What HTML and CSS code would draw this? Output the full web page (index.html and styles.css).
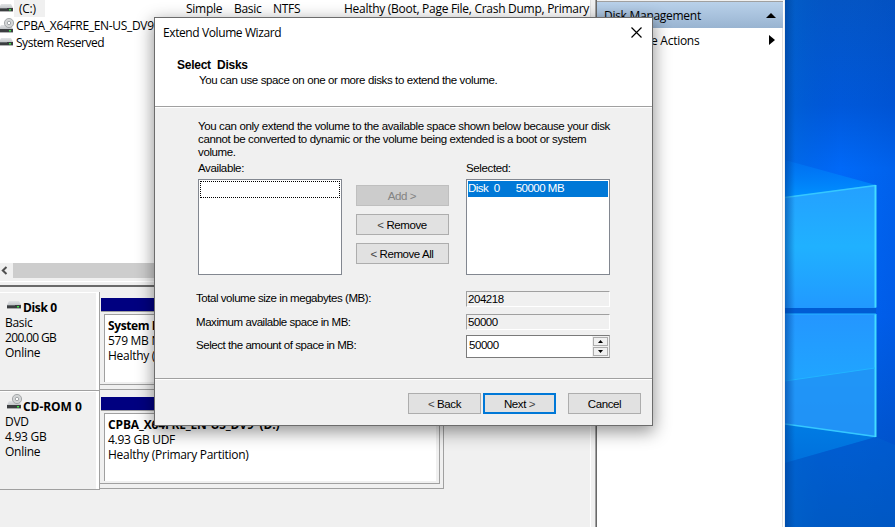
FILE: index.html
```html
<!DOCTYPE html>
<html lang="en">
<head>
<meta charset="utf-8">
<title>Extend Volume Wizard</title>
<link rel="stylesheet" href="styles.css">
</head>
<body>
<svg width="0" height="0" class="defs" aria-hidden="true">
  <defs>
    <linearGradient id="metal" x1="0" y1="0" x2="0" y2="1"><stop offset="0" stop-color="#e2e4e6"/><stop offset="1" stop-color="#c3c6c9"/></linearGradient>
    <symbol id="drive" viewBox="0 0 14 8">
      <path d="M2 0h10l2 4H0z" fill="url(#metal)"/>
      <path d="M0 4h14v3.4H0z" fill="#3b3e40"/>
      <path d="M0 4h8v1H0z" fill="#62676a"/>
      <path d="M10 5h2v1.4h-2z" fill="#3fe04a"/>
    </symbol>
    <symbol id="cdrom" viewBox="0 0 15 15">
      <path d="M2 7h10l2 4H0z" fill="url(#metal)"/>
      <path d="M0 11h14v3.4H0z" fill="#3b3e40"/>
      <path d="M10 12h2v1.4h-2z" fill="#3fe04a"/>
      <circle cx="10" cy="5" r="4.6" fill="#d3d5d6" stroke="#95999c" stroke-width=".8"/>
      <circle cx="10" cy="5" r="1.7" fill="#fff" stroke="#9a9ea1" stroke-width=".9"/>
    </symbol>
  </defs>
</svg>
<div class="screen">
  <main class="console">
    <section class="left">
      <div class="volumes">
        <div class="vol"><svg class="ico" width="14" height="8"><use href="#drive"/></svg><span class="name picked">(C:)</span><span class="layout">Simple</span><span class="type">Basic</span><span class="fs">NTFS</span><span class="status">Healthy (Boot, Page File, Crash Dump, Primary</span></div>
        <div class="vol"><svg class="ico" width="15" height="15"><use href="#cdrom"/></svg><span class="name cd">CPBA_X64FRE_EN-US_DV9</span></div>
        <div class="vol"><svg class="ico" width="14" height="8"><use href="#drive"/></svg><span class="name sys">System Reserved</span></div>
      </div>
      <div class="scroll"><svg width="13" height="15"><path d="M6.5 4 2.8 7.5l3.7 3.5" fill="none" stroke="#505050" stroke-width="2"/></svg><div class="thumb"></div></div>
      <div class="splitter"></div>
      <div class="disks">
        <div class="disk">
          <div class="info">
            <b><svg class="dico" width="14" height="8"><use href="#drive"/></svg>Disk 0</b>
            <span>Basic</span><span class="num">200.00 GB</span><span>Online</span>
          </div>
          <div class="track wide"><div class="part"><div class="stripe"></div><div class="box"><b class="tight">System Reserved</b><span>579 MB NTFS</span><span>Healthy (System, Active)</span></div></div></div>
        </div>
        <div class="disk">
          <div class="info">
            <b class="loose"><svg class="dico cdi" width="15" height="15"><use href="#cdrom"/></svg>CD-ROM 0</b>
            <span>DVD</span><span>4.93 GB</span><span>Online</span>
          </div>
          <div class="track"><div class="part"><div class="stripe"></div><div class="box"><b>CPBA_X64FRE_EN-US_DV9&nbsp; (D:)</b><span>4.93 GB UDF</span><span>Healthy (Primary Partition)</span></div></div></div>
        </div>
      </div>
    </section>
    <aside class="actions">
      <div class="ahead"><span>Disk Management</span><svg width="10" height="5"><path d="M5 0l5 5H0z"/></svg></div>
      <div class="arow"><span>More Actions</span><svg width="6" height="10"><path d="M0 0l6 5L0 10z"/></svg></div>
    </aside>
  </main>
  <svg class="desktop" width="110" height="527" viewBox="785 0 110 527" preserveAspectRatio="none">
    <defs>
      <linearGradient id="sky" x1="0" y1="0" x2="0" y2="1"><stop offset="0" stop-color="#0455c4"/><stop offset=".2" stop-color="#0058da"/><stop offset=".32" stop-color="#0069f8"/><stop offset=".6" stop-color="#0062f2"/><stop offset=".82" stop-color="#0058d4"/><stop offset="1" stop-color="#0052bd"/></linearGradient>
      <linearGradient id="dim" x1="0" y1="0" x2="1" y2="0"><stop offset="0" stop-color="#0070d0" stop-opacity=".4"/><stop offset=".5" stop-color="#0050c0" stop-opacity="0"/><stop offset="1" stop-color="#0040b8" stop-opacity=".2"/></linearGradient>
      <linearGradient id="p1" x1="0" y1="0" x2="0" y2="1"><stop offset="0" stop-color="#24a0ff"/><stop offset=".5" stop-color="#20b1ff"/><stop offset="1" stop-color="#2199ff"/></linearGradient>
      <linearGradient id="p2" x1="0" y1="0" x2="0" y2="1"><stop offset="0" stop-color="#2496ff"/><stop offset=".5" stop-color="#20a4ff"/><stop offset="1" stop-color="#2096fa"/></linearGradient>
      <linearGradient id="ray" x1="0" y1="0" x2="0" y2="1"><stop offset="0" stop-color="#007cf8" stop-opacity=".4"/><stop offset="1" stop-color="#0092ff"/></linearGradient>
      <linearGradient id="low" x1="0" y1="0" x2="0" y2="1"><stop offset="0" stop-color="#007ce4"/><stop offset="1" stop-color="#0070dc"/></linearGradient>
      <linearGradient id="edge" x1="0" y1="0" x2="1" y2="0"><stop offset="0" stop-color="#003c90" stop-opacity=".55"/><stop offset="1" stop-color="#003c90" stop-opacity="0"/></linearGradient>
    </defs>
    <path d="M785 0h110v527H785z" fill="url(#sky)"/>
    <path d="M785 0h110v527H785z" fill="url(#dim)"/>
    <path d="M785 160l91 25-91 12z" fill="url(#ray)"/>
    <path d="M785 424l91 13-91 26z" fill="url(#low)"/>
    <path d="M785 463l91-26 19 8v82H785z" fill="#0067d0" opacity=".35"/>
    <path d="M785 197l91-12v123h-91z" fill="url(#p1)"/>
    <path d="M785 314h91v123l-91-13z" fill="url(#p2)"/>
    <path d="M785 381l90-13v69l-90-13z" fill="#2090f4" opacity=".75"/>
    <path d="M785 308h91v5.500h-91z" fill="#005cd4"/>
    <path d="M785 197.500l90.500-12M785 424l90.500 12.500" fill="none" stroke="#35c8ff" stroke-width="1.600"/>
    <path d="M875.500 185v122.500M875.500 314v123" fill="none" stroke="#43dcff" stroke-width="2"/>
    <path d="M785 314h91M785 381l90-13" fill="none" stroke="#22b4ff"/>
    <path d="M785 0h10v527h-10z" fill="url(#edge)"/>
  </svg>
</div>

<div class="dialog">
  <header class="dhead">
    <div class="titlebar"><span class="title">Extend Volume Wizard</span><svg width="11" height="11"><path d="M.5.5l10 10M10.500.5l-10 10" stroke="#000" stroke-width="1.200" fill="none"/></svg></div>
    <div class="heading">Select&nbsp; Disks</div>
    <div class="sub">You can use space on one or more disks to extend the volume.</div>
  </header>
  <div class="body">
    <p class="note">You can only extend the volume to the available space shown below because your disk<br>cannot be converted to dynamic or the volume being extended is a boot or system<br>volume.</p>
    <div class="pick">
      <div class="col"><span class="lab">Available:</span><div class="list"><div class="focus"></div></div></div>
      <div class="moves"><div class="btn off">Add &gt;</div><div class="btn"><span class="lt">&lt;</span>&nbsp;Remove</div><div class="btn"><span class="lt">&lt;</span>&nbsp;Remove All</div></div>
      <div class="col"><span class="lab">Selected:</span><div class="list"><div class="item"><span>Disk&nbsp; 0</span><span>50000 MB</span></div></div></div>
    </div>
    <div class="form">
      <div class="frow r1"><span>Total volume size in megabytes (MB):</span><div class="field">204218</div></div>
      <div class="frow r2"><span>Maximum available space in MB:</span><div class="field">50000</div></div>
      <div class="frow r3"><span>Select the amount of space in MB:</span><div class="spin"><div class="val">50000</div><div class="ud"><i><svg width="5" height="3"><path d="M2.500 0L5 3H0z"/></svg></i><i><svg width="5" height="3"><path d="M0 0h5L2.500 3z"/></svg></i></div></div></div>
    </div>
  </div>
  <footer class="foot"><div class="btn"><span class="lt">&lt;</span>&nbsp;Back</div><div class="btn def">Next&nbsp;<span class="lt">&gt;</span></div><div class="btn cancel">Cancel</div></footer>
</div>
</body>
</html>
```
FILE: styles.css
```css
* { box-sizing: border-box; }
html, body { margin: 0; height: 527px; overflow: hidden; }
body { position: relative; font: 12px/17px "Open Sans", "Noto Sans", sans-serif; letter-spacing: -.28px; color: #000; white-space: nowrap; }
.defs { position: absolute; }
svg { display: block; flex: none; }
.screen { display: flex; width: 895px; height: 527px; }
.console { display: flex; width: 785px; background: #f0f0f0; }

.left { display: flex; flex-direction: column; width: 597px; border-right: 1px solid #696969; box-shadow: inset -1px 0 #a0a0a0; }
.volumes { width: 591px; height: 263px; background: #fff; border-right: 1px solid #e0e0e0; overflow: hidden; }
.vol { display: flex; align-items: center; height: 17px; }
.ico { margin-left: -1px; margin-top: -1px; }
.name { width: 172px; }
.name.picked { width: 31px; margin: 0 142px 0 1px; padding-left: 5px; background: #f0f0f0; }
.name.cd { margin-left: 2px; letter-spacing: -.32px; }
.name.sys { margin-left: 3px; letter-spacing: -.46px; }
.vol .layout { margin-left: -1px; width: 48px; }
.vol .type { width: 39px; }
.vol .fs { width: 71px; }
.scroll { display: flex; width: 590px; height: 15px; }
.thumb { flex: 1; background: #cdcdcd; }
.splitter { height: 9px; border-bottom: 2px solid #696969; background: linear-gradient(#f0f0f0 3px, #fff 3px, #fff 4px, #f0f0f0 4px); width: 595px; }
.disks { padding-top: 5px; width: 591px; flex: 1; border-right: 1px solid #fff; }
.disk { display: flex; height: 99px; }
.info { display: flex; flex-direction: column; width: 100px; height: 99px; padding: 8px 0 0 5px; line-height: 15px; border: solid #a0a0a0; border-width: 0 1px 1px 0; box-shadow: inset -3px 1px #fff; }
.info b { display: flex; height: 15px; letter-spacing: -.35px; }
.info b.loose { letter-spacing: -.05px; }
.info .num { letter-spacing: -.67px; }
.dico { margin: 1px 2px 0 2px; }
.dico.cdi { margin: -5px 1px 0 2px; }
.track { width: 344px; height: 99px; margin-top: -1px; padding: 0 3px 3px 0; border: solid #a0a0a0; border-width: 0 1px 1px 0; }
.track.wide { width: 480px; }
.part { height: 94px; padding: 7px 0 0 1px; border: solid #a0a0a0; border-width: 0 1px 1px 0; }
.stripe { height: 14px; background: #000080; border-bottom: 1px solid #a0a0a0; }
.box { display: flex; flex-direction: column; margin: 2px 3px 0 3px; height: 68px; padding: 3px 0 0 3px; line-height: 15px; background: #fff; border: solid #a0a0a0; border-width: 1px 0 0 1px; }
.box b { letter-spacing: -.15px; }
.box b.tight { letter-spacing: -.4px; }

.actions { width: 187px; padding-top: 1px; background: #fff; border-right: 1px solid #fff; box-shadow: inset -1px 0 #e0e0e0; border-top: 1px solid #f0f0f0; }
.ahead { display: flex; align-items: center; justify-content: space-between; height: 27px; width: 186px; margin-top: -1px; padding: 1px 7px 0 7px; background: linear-gradient(#b9d1ea, #99b4d1); border-top: 1px solid #a0a0a0; }
.arow { display: flex; align-items: center; justify-content: space-between; height: 24px; padding: 0 8px 0 32px; }

.dialog { position: absolute; left: 154px; top: 17px; width: 499px; height: 409px; display: flex; flex-direction: column; background: #f0f0f0; border: 1px solid #6c6c6c; box-shadow: 0 5px 16px 1px rgba(0,0,0,.42); font: 11.500px/13px "Liberation Sans", Arial, sans-serif; letter-spacing: -.37px; }
.dhead { height: 89px; width: 497px; background: #fff; border-bottom: 1px solid #a0a0a0; box-shadow: 0 1px #fff; }
.titlebar { display: flex; align-items: center; justify-content: space-between; height: 30px; padding: 0 10px 0 8px; }
.titlebar svg { margin-top: -1px; }
.title { font: 12px/30px "Open Sans", sans-serif; letter-spacing: -.4px; }
.heading { margin: 11px 0 0 22px; font-weight: bold; font-size: 12px; line-height: 13px; letter-spacing: -.25px; }
.sub { margin: 2px 0 0 44px; }
.body { height: 272px; padding: 13px 41px 0 41px; border-bottom: 1px solid #a0a0a0; }
.note { margin: 0 0 0 2px; }
.pick { display: flex; justify-content: space-between; width: 412px; margin: 3px 0 0 2px; }
.col { display: flex; flex-direction: column; width: 144px; }
.lab { height: 17px; }
.list { height: 96px; padding: 1px; background: #fff; border: 1px solid #828790; }
.focus { height: 17px; border: 1px dotted #000; }
.item { display: flex; gap: 16px; height: 16px; background: #0078d7; color: #fff; line-height: 15px; letter-spacing: -.5px; }
.moves { display: flex; flex-direction: column; gap: 8px; padding-top: 23px; margin-left: -4px; }
.btn { display: flex; align-items: center; justify-content: center; width: 93px; height: 21px; background: #e1e1e1; border: 1px solid #adadad; padding-top: 1px; }
.off { background: #ccc; border-color: #bfbfbf; color: #838383; }
.moves .btn, .foot .btn { letter-spacing: -.42px; }
.lt { color: #444; }
.form { margin-top: 16px; letter-spacing: -.45px; }
.frow { display: flex; justify-content: space-between; width: 414px; }
.frow > span { padding-top: 1px; }
.field { width: 144px; height: 16px; padding-left: 1px; line-height: 14px; border: 1px solid; border-color: #a0a0a0 #fff #fff #a0a0a0; }
.r2 { margin-top: 7px; }
.r3 { margin-top: 5px; }
.frow.r2 > span { padding-top: 2px; }
.frow.r3 > span { padding-top: 4px; }
.spin { display: flex; width: 144px; height: 23px; border: 1px solid #7a7a7a; border-right-color: #adadad; background: #fff; }
.val { flex: 1; padding: 3px 0 0 2px; }
.ud { display: flex; flex-direction: column; gap: 1px; width: 17px; padding: 1px; background: #f0f0f0; }
.ud i { display: flex; align-items: center; justify-content: center; height: 9px; border: 1px solid #adadad; }
.foot { display: flex; gap: 2px; width: 497px; padding: 14px 0 0 253px; box-shadow: inset 0 1px #fff; }
.foot .btn { width: 73px; }
.foot .def { border: 2px solid #0078d7; padding-top: 1px; }
.foot .cancel { margin-left: 10px; }
```
